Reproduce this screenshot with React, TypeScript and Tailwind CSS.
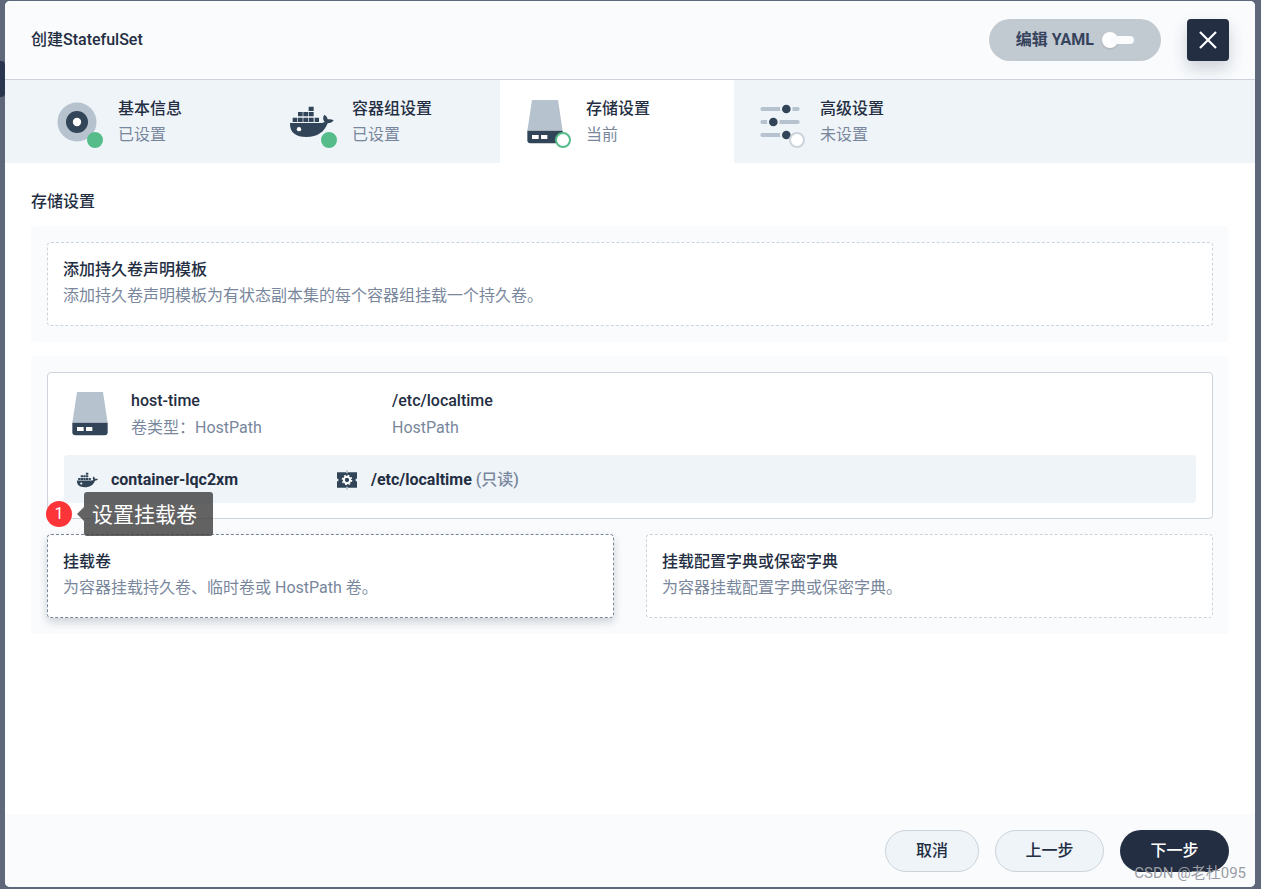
import type { ReactNode } from "react";
import clsx from "clsx";

function BasicIcon() {
  return (
    <svg viewBox="0 0 50 50" className="size-[50px]" aria-hidden="true">
      <circle cx="25" cy="25" r="19.5" fill="#b6c2cd" />
      <circle cx="25" cy="25" r="11" fill="#324558" />
      <circle cx="25" cy="25" r="4.2" fill="#fff" />
    </svg>
  );
}

function DockerIcon({ className }: { className: string }) {
  return (
    <svg viewBox="45 51 150 150" className={className} fill="#324558" aria-hidden="true">
      <path d="M113 80h15v13h-15zM81 96h14v13H81zM97 96h14v13H97zM113 96h15v13h-15zM65 113h14v13H65zM81 113h14v13H81zM97 113h14v13H97zM113 113h15v13h-15zM131 113h13v13h-13z" />
      <path d="M57 129h92c5 0 9-1 12-3-6-7-6-15-1-22 6 4 9 8 10 14 6-1 12-1 18 3-4 6-10 9-18 9-10 26-30 41-64 41-32 0-50-13-49-42z" />
      <circle cx="84" cy="147.500" r="6.500" fill="#fff" />
    </svg>
  );
}

function DiskIcon() {
  return (
    <svg viewBox="60 51 150 150" className="size-[50px]" aria-hidden="true">
      <path d="M96 60h78l14 92H82z" fill="#b6c2cd" />
      <path d="M82 152h106v29q0 9-9 9H91q-9 0-9-9z" fill="#324558" />
      <path d="M96 165h20v12H96zM123 165h19v12h-19z" fill="#fff" />
    </svg>
  );
}

function SlidersIcon() {
  return (
    <svg viewBox="762 51 150 150" className="size-[50px]" aria-hidden="true">
      <path d="M787 87h106M787 126h106M787 165h106" stroke="#b6c2cd" strokeWidth="12" strokeLinecap="round" />
      <g fill="#324558" stroke="#eff4f9" strokeWidth="6">
        <circle cx="859" cy="87" r="16" />
        <circle cx="820" cy="126" r="16" />
        <circle cx="859" cy="165" r="16" />
      </g>
    </svg>
  );
}

function ConfigIcon() {
  return (
    <svg viewBox="0 0 60 60" className="size-5" aria-hidden="true">
      <path d="M0 7h60v19h-4v8h4v19H0V34h4v-8H0z" fill="#324558" />
      <path d="M30 1v9M30 50v9" stroke="#b6c2cd" strokeWidth="5" />
      <circle cx="30" cy="30" r="14" fill="none" stroke="#fff" strokeWidth="4" strokeDasharray="5.500 5.500" />
      <circle cx="30" cy="30" r="9.500" fill="none" stroke="#fff" strokeWidth="6" />
    </svg>
  );
}

type Status = "done" | "current" | "todo";

const steps: { title: string; state: string; status: Status; icon: ReactNode }[] = [
  { title: "基本信息", state: "已设置", status: "done", icon: <BasicIcon /> },
  { title: "容器组设置", state: "已设置", status: "done", icon: <DockerIcon className="size-[50px]" /> },
  { title: "存储设置", state: "当前", status: "current", icon: <DiskIcon /> },
  { title: "高级设置", state: "未设置", status: "todo", icon: <SlidersIcon /> },
];

const dotStyles: Record<Status, string> = {
  done: "border-[#55bc8a] bg-[#55bc8a]",
  current: "border-[#55bc8a] bg-white",
  todo: "border-[#ccd3db] bg-white",
};

function Option({ title, text, active }: { title: string; text: string; active?: boolean }) {
  return (
    <button
      type="button"
      className={clsx(
        "w-full rounded border border-dashed bg-white px-[15px] pt-[14px] pb-4 text-left leading-[26px]",
        active ? "border-[#79879c] shadow-[0_4px_8px_rgba(36,46,66,0.2)]" : "border-[#ccd3db]",
      )}
    >
      <span className="block font-medium">{title}</span>
      <span className="block text-[#79879c]">{text}</span>
    </button>
  );
}

export default function App() {
  return (
    <div className="relative flex min-h-screen flex-col bg-[#5f687b] px-[5px] pt-px pb-[2px] pr-[6px] font-[Roboto,'Noto_Sans_CJK_SC',sans-serif] text-[16px] leading-[26px] text-[#242e42]">
      <div className="absolute top-[61px] left-0 h-9 w-[5px] rounded-r bg-[#2a3550]" aria-hidden="true" />
      <div
        role="dialog"
        aria-labelledby="dialog-title"
        className="relative flex flex-1 flex-col overflow-hidden rounded-[5px] bg-white"
      >
        <header className="flex items-center justify-between border-b border-[#ccd3db] bg-[#f9fbfd] px-[26px] py-[18px]">
          <h1 id="dialog-title" className="font-medium">创建StatefulSet</h1>
          <div className="flex items-center gap-[26px]">
            <button
              type="button"
              role="switch"
              aria-checked="false"
              className="flex h-[42px] items-center gap-2 rounded-full bg-[#c1c9d1] px-[27px] font-bold text-[#36435c]"
            >
              编辑 YAML
              <span className="flex h-4 w-8 items-center">
                <span className="size-4 rounded-full bg-white shadow-sm" />
                <span className="-ml-2 h-2 flex-1 rounded-full bg-[#f9fbfd]" />
              </span>
            </button>
            <button
              type="button"
              aria-label="关闭"
              className="flex size-[42px] items-center justify-center rounded bg-[#242e42] shadow-[0_8px_16px_rgba(36,46,66,0.2)]"
            >
              <svg viewBox="0 0 20 20" className="size-5" aria-hidden="true">
                <path d="M2 2l16 16M18 2L2 18" stroke="#fff" strokeWidth="2.200" />
              </svg>
            </button>
          </div>
        </header>

        <nav className="flex bg-[#eff4f9] pl-[27px]" aria-label="步骤">
          {steps.map((step) => (
            <a
              key={step.title}
              href="#"
              aria-current={step.status === "current" ? "step" : undefined}
              className={clsx(
                "flex w-[234px] items-center gap-4 px-5 pt-4 pb-[15px]",
                step.status === "current" && "bg-white",
              )}
            >
              <span className="relative">
                {step.icon}
                <span
                  className={clsx("absolute -right-px -bottom-px size-4 rounded-full border-2", dotStyles[step.status])}
                />
              </span>
              <span>
                <span className="block font-medium">{step.title}</span>
                <span className="block text-[#79879c]">{step.state}</span>
              </span>
            </a>
          ))}
        </nav>

        <main className="flex-1 px-[26px] pt-[26px] pb-4">
          <h2 className="mb-[11px] font-medium">存储设置</h2>

          <section className="mb-[14px] rounded bg-[#f9fbfd] p-4">
            <Option title="添加持久卷声明模板" text="添加持久卷声明模板为有状态副本集的每个容器组挂载一个持久卷。" />
          </section>

          <section className="rounded bg-[#f9fbfd] p-4">
            <article className="rounded border border-[#ccd3db] bg-white p-4 pt-[14px] pb-[15px]">
              <div className="mb-[14px] flex items-center pl-px leading-[27px]">
                <DiskIcon />
                <div className="ml-4 w-[261px]">
                  <p className="font-medium">host-time</p>
                  <p className="text-[#79879c]">卷类型：HostPath</p>
                </div>
                <div>
                  <p className="font-medium">/etc/localtime</p>
                  <p className="text-[#79879c]">HostPath</p>
                </div>
              </div>
              <div className="flex items-center rounded bg-[#eff4f9] px-[11px] pt-3 pb-[10px] font-bold">
                <div className="flex w-[262px] items-center gap-3">
                  <DockerIcon className="size-6" />
                  <span>container-lqc2xm</span>
                </div>
                <div className="flex items-center gap-[14px]">
                  <ConfigIcon />
                  <span>
                    /etc/localtime <span className="font-medium text-[#79879c]">(只读)</span>
                  </span>
                </div>
              </div>
            </article>

            <div className="mt-[15px] grid grid-cols-2 gap-8">
              <div className="relative">
                <Option active title="挂载卷" text="为容器挂载持久卷、临时卷或 HostPath 卷。" />
                <div className="absolute -top-[42px] -left-px flex items-center">
                  <span className="flex size-[26px] items-center justify-center rounded-full bg-[#fd3538] text-white">
                    1
                  </span>
                  <svg viewBox="0 0 7 14" className="ml-[5px] h-[14px] w-[7px]" aria-hidden="true">
                    <path d="M7 0v14L0 7z" fill="#3c3c3c" fillOpacity="0.8" />
                  </svg>
                  <span
                    role="tooltip"
                    className="rounded-[3px] bg-[#3c3c3c]/80 pt-[10px] pr-4 pb-2 pl-2 text-[21px] leading-[26px] whitespace-nowrap text-white"
                  >
                    设置挂载卷
                  </span>
                </div>
              </div>
              <Option title="挂载配置字典或保密字典" text="为容器挂载配置字典或保密字典。" />
            </div>
          </section>
        </main>

        <footer className="flex justify-end gap-4 bg-[#f9fbfd] px-[26px] pt-4 pb-[15px] font-medium">
          <button type="button" className="h-[42px] w-[94px] rounded-full border border-[#ccd3db] bg-[#eff4f9]">
            取消
          </button>
          <button type="button" className="h-[42px] w-[109px] rounded-full border border-[#ccd3db] bg-[#eff4f9]">
            上一步
          </button>
          <button type="button" className="h-[42px] w-[109px] rounded-full bg-[#242e42] text-white">
            下一步
          </button>
        </footer>
      </div>
      <span className="absolute right-[15px] bottom-1 text-[15px] leading-6 text-[#999da3]">CSDN @老杜095</span>
    </div>
  );
}
